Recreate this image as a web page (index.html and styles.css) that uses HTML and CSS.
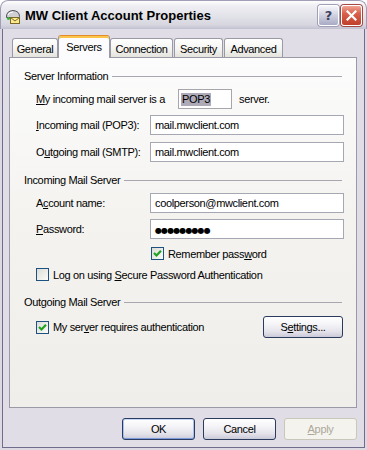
FILE: index.html
```html
<!DOCTYPE html>
<html lang="en">
<head>
    <meta charset="UTF-8">
    <title>MW Client Account Properties</title>
    <link rel="stylesheet" href="styles.css">
</head>
<body>
    <div class="window">
        <div class="titlebar">
            <svg class="app-icon" width="16" height="16" viewBox="0 0 16 16">
                <path d="M1.5 9.5 Q1 3 8 2.5 Q14.5 3 14.5 8.5 L14.5 9.5 Z" fill="#cfcfd4" stroke="#4e4e58"/>
                <path d="M3 7 Q4 4 8 4" fill="none" stroke="#fff"/>
                <rect x="5.5" y="9.5" width="9" height="6" fill="#fbe98c" stroke="#7a6a2a"/>
                <path d="M5.5 9.5 L10 13 L14.5 9.5" fill="none" stroke="#7a6a2a"/>
                <circle cx="3.5" cy="10.5" r="1.5" fill="#3cb43c"/>
            </svg>
            <span class="title">MW Client Account Properties</span>
            <div class="caption-buttons">
                <div class="cap-btn help">?</div>
                <div class="cap-btn close">
                    <svg width="11" height="11" viewBox="0 0 11 11">
                        <path d="M1.5 1.5 L9.5 9.5 M9.5 1.5 L1.5 9.5" stroke="#fff" stroke-width="2.2" stroke-linecap="square"/>
                    </svg>
                </div>
            </div>
        </div>

        <div class="client">
            <div class="tabs">
                <div class="tab tab-general">General</div>
                <div class="tab tab-servers active">Servers</div>
                <div class="tab tab-connection">Connection</div>
                <div class="tab tab-security">Security</div>
                <div class="tab tab-advanced">Advanced</div>
            </div>

            <div class="panel">
                <div class="group-title first"><span>Server Information</span><i class="rule"></i></div>

                <div class="row server-type">
                    <span class="type-label"><u>M</u>y incoming mail server is a</span>
                    <span class="type-box"><span class="hilite">POP3</span></span>
                    <span class="type-after">server.</span>
                </div>

                <div class="row field gap6">
                    <span class="label"><u>I</u>ncoming mail (POP3):</span>
                    <div class="textbox">mail.mwclient.com</div>
                </div>
                <div class="row field gap7">
                    <span class="label">O<u>u</u>tgoing mail (SMTP):</span>
                    <div class="textbox">mail.mwclient.com</div>
                </div>

                <div class="group-title second"><span>Incoming Mail Server</span><i class="rule"></i></div>

                <div class="row field gap6">
                    <span class="label">A<u>c</u>count name:</span>
                    <div class="textbox">coolperson@mwclient.com</div>
                </div>
                <div class="row field gap6">
                    <span class="label"><u>P</u>assword:</span>
                    <div class="textbox"><span class="dots">●●●●●●●●●</span></div>
                </div>

                <div class="row check remember">
                    <span class="checkbox checked"><svg width="11" height="11" viewBox="0 0 11 11"><path d="M2 5 L4.5 7.5 L9 2.8" fill="none" stroke="#21a121" stroke-width="2.2"/></svg></span>
                    <span>Remember pass<u>w</u>ord</span>
                </div>
                <div class="row check spa">
                    <span class="checkbox"></span>
                    <span>Log on using <u>S</u>ecure Password Authentication</span>
                </div>

                <div class="group-title third"><span>Outgoing Mail Server</span><i class="rule"></i></div>

                <div class="row auth">
                    <span class="checkbox checked"><svg width="11" height="11" viewBox="0 0 11 11"><path d="M2 5 L4.5 7.5 L9 2.8" fill="none" stroke="#21a121" stroke-width="2.2"/></svg></span>
                    <span>My ser<u>v</u>er requires authentication</span>
                    <div class="btn settings">S<u>e</u>ttings...</div>
                </div>
            </div>

            <div class="actions">
                <div class="btn default">OK</div>
                <div class="btn">Cancel</div>
                <div class="btn disabled"><u>A</u>pply</div>
            </div>
        </div>
    </div>
</body>
</html>
```

FILE: styles.css
```css
body {
    margin: 0;
    background: #fff;
    font-family: "Liberation Sans", Arial, sans-serif;
    font-size: 11px;
    letter-spacing: -0.35px;
    color: #000;
}

.window {
    width: 367px;
    height: 450px;
    display: flex;
    flex-direction: column;
    background: #dcd9e3;
    border-radius: 8px 8px 0 0;
    overflow: hidden;
}

/* title bar */
.titlebar {
    height: 29px;
    flex: none;
    box-sizing: border-box;
    display: flex;
    align-items: center;
    padding: 0 4px 0 4px;
    border: 1px solid #9f9eb6;
    border-bottom: none;
    border-radius: 8px 8px 0 0;
    background: linear-gradient(#fefefe 0%, #eeeef3 18%, #e2e2e9 55%, #d7d6e0 85%, #c2c1d1 100%);
}

.app-icon {
    flex: none;
    margin-top: 1px;
}

.title {
    margin-left: 4px;
    font-weight: bold;
    font-size: 13px;
    letter-spacing: 0;
    color: #000;
}

.caption-buttons {
    margin-left: auto;
    display: flex;
    gap: 2px;
}

.cap-btn {
    width: 21px;
    height: 21px;
    box-sizing: border-box;
    border: 1px solid #fff;
    border-radius: 3px;
    display: flex;
    align-items: center;
    justify-content: center;
}

.help {
    background: linear-gradient(#f6f7fb, #d3d4e2 45%, #a9abc4);
    color: #3f4160;
    font-family: "DejaVu Sans", sans-serif;
    font-weight: bold;
    font-size: 13px;
    letter-spacing: 0;
    box-shadow: 0 0 0 1px #9fa0b8;
}

.close {
    background: linear-gradient(#f0a493, #d8604b 40%, #c0402c);
    box-shadow: 0 0 0 1px #a44a44;
}

/* client area */
.client {
    flex: 1;
    margin: 0 2px 2px;
    border: 1px solid #6f6d8b;
    border-top: none;
    background: #e0dde7;
    padding: 6px 7px 0 6px;
}

.tabs {
    height: 22px;
    display: flex;
    align-items: flex-end;
}

.tab {
    height: 19px;
    box-sizing: border-box;
    border: 1px solid #9a9aa6;
    border-bottom: none;
    border-radius: 3px 3px 0 0;
    background: linear-gradient(#ffffff, #f4f4f1 55%, #e4e3dd);
    display: flex;
    align-items: center;
    justify-content: center;
    padding-top: 1px;
}

.tab-general { margin-left: 3px; width: 46px; }
.tab-servers { width: 52px; }
.tab-connection { width: 63px; }
.tab-security { margin-left: 1px; width: 49px; }
.tab-advanced { margin-left: 1px; width: 59px; }

.tab.active {
    height: 23px;
    margin-bottom: -1px;
    position: relative;
    z-index: 1;
    border-top: 1px solid #e68b2c;
    box-shadow: inset 0 2px 0 #fbc54a;
    background: #fcfcfe;
    align-items: flex-start;
    padding-top: 5px;
}

.panel {
    height: 351px;
    box-sizing: border-box;
    border: 1px solid #9a9aa6;
    background: linear-gradient(#fcfcfc, #f4f3f0 45%, #efeeea);
    padding: 0 12px 0 14px;
}

.group-title {
    height: 14px;
    display: flex;
    align-items: center;
    padding-right: 2px;
}

.group-title .rule {
    flex: 1;
    height: 1px;
    margin-left: 4px;
    background: #a8a7b0;
}

.group-title.first { margin-top: 11px; }
.group-title.second { margin-top: 11px; }
.group-title.third { margin-top: 14px; }

.row {
    display: flex;
    align-items: center;
    padding-left: 12px;
}

.gap6 { margin-top: 6px; }
.gap7 { margin-top: 7px; }

.server-type {
    height: 20px;
    margin-top: 6px;
}

.type-label {
    width: 142px;
    flex: none;
}

.type-box {
    width: 54px;
    height: 20px;
    box-sizing: border-box;
    border: 1px solid #a7a6ac;
    background: #fff;
    padding-left: 2px;
    display: flex;
    align-items: center;
}

.hilite {
    background: #aeaab8;
    line-height: 13px;
    padding: 0 1px;
}

.type-after {
    margin-left: 7px;
}

.label {
    width: 114px;
    flex: none;
}

.textbox {
    flex: 1;
    height: 20px;
    box-sizing: border-box;
    border: 1px solid #a5a8b2;
    background: #fff;
    padding-left: 4px;
    line-height: 18px;
}

.dots {
    font-family: "DejaVu Sans", sans-serif;
    font-size: 8px;
    letter-spacing: -0.9px;
}

.check {
    height: 13px;
    gap: 4px;
}

.remember {
    margin-top: 8px;
    padding-left: 127px;
}

.spa {
    margin-top: 8px;
}

.checkbox {
    width: 13px;
    height: 13px;
    flex: none;
    box-sizing: border-box;
    border: 1px solid #1c5180;
    background: linear-gradient(135deg, #dcdcd7, #fbfbf9);
    display: flex;
    align-items: center;
    justify-content: center;
}

.auth {
    height: 22px;
    margin-top: 7px;
    gap: 4px;
    padding-right: 1px;
}

.btn {
    height: 22px;
    box-sizing: border-box;
    border: 1px solid #2a3b5e;
    border-radius: 3px;
    background: linear-gradient(#ffffff, #f5f5f8 35%, #e3e2ea 75%, #cac9d8);
    display: flex;
    align-items: center;
    justify-content: center;
}

.settings {
    width: 80px;
    margin-left: auto;
}

.actions {
    display: flex;
    justify-content: flex-end;
    gap: 8px;
    margin-top: 10px;
}

.actions .btn {
    width: 73px;
}

.btn.default {
    box-shadow: inset 0 1px 0 #c8d8f8, inset 0 -1px 0 #7c9be0, inset 1px 0 0 #a8c0f0, inset -1px 0 0 #a8c0f0;
}

.btn.disabled {
    border-color: #c9c7ba;
    background: #f4f3ee;
    color: #aca899;
}
```
